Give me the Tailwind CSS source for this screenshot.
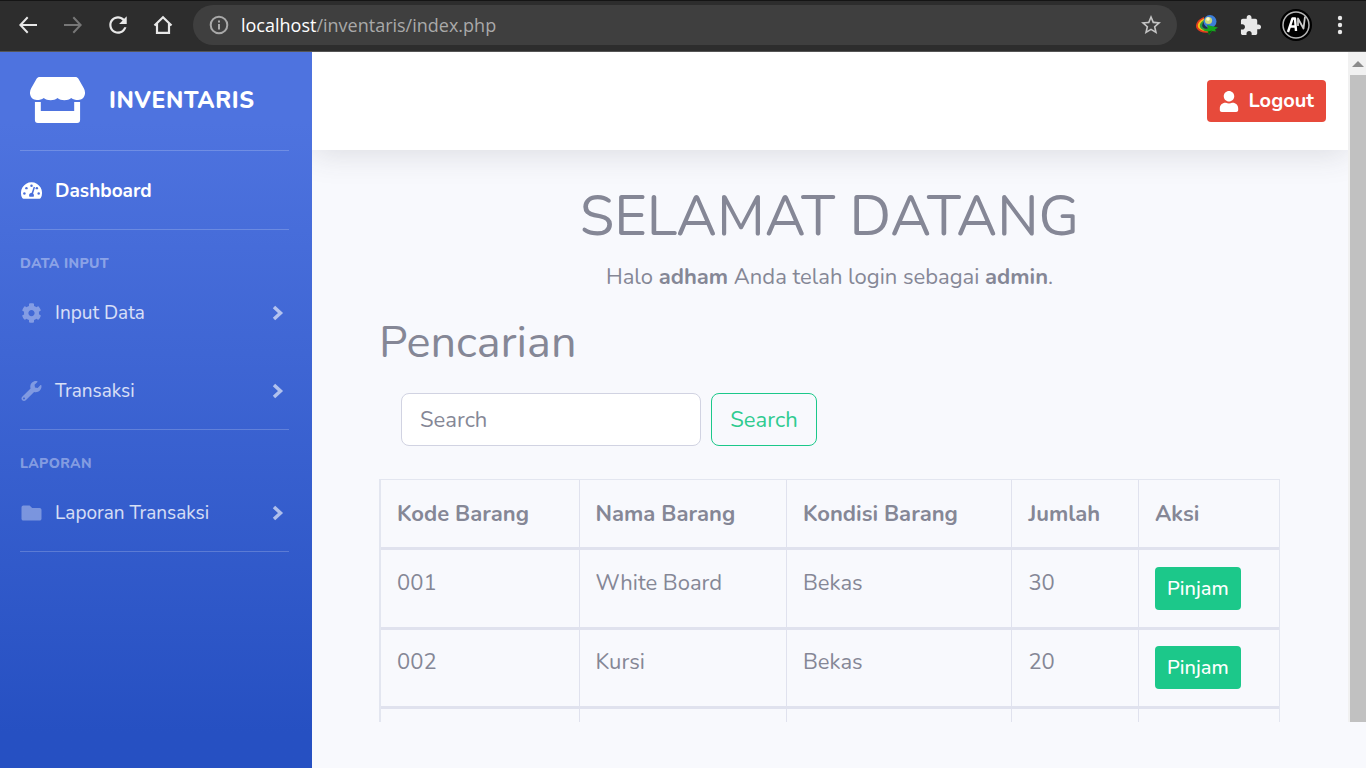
<!DOCTYPE html>
<html lang="id">
<head>
<meta charset="utf-8">
<meta name="viewport" content="width=device-width, initial-scale=1">
<title>Inventaris</title>
<script src="https://cdn.jsdelivr.net/npm/@tailwindcss/browser@4"></script>
</head>
<body class="flex h-screen flex-col overflow-hidden bg-[#f8f9fd] font-[Nunito,Lato,sans-serif] text-[#858796]">

<!-- Browser toolbar -->
<header class="flex h-[52px] shrink-0 items-center border-t border-b border-t-[#151515] border-b-[#555] bg-[#2d2d2d] pr-[14px] pb-[2px] pl-4 text-[#e8e8e8]">
  <div class="flex items-center gap-[21px]">
    <button type="button" aria-label="Back"><svg class="size-6" viewBox="0 0 24 24" fill="currentColor"><path d="M21 11H6.8l5.6-6L11 3.5 3 12l8 8.500 1.400-1.500-5.600-6H21z"/></svg></button>
    <button type="button" aria-label="Forward" class="text-[#777]"><svg class="size-6" viewBox="0 0 24 24" fill="currentColor"><path d="M3 11h14.200l-5.600-6L13 3.500 21 12l-8 8.500-1.400-1.500 5.600-6H3z"/></svg></button>
    <button type="button" aria-label="Reload"><svg class="size-6" viewBox="1 1 22 22" fill="currentColor"><path d="M17.65 6.350C16.200 4.900 14.210 4 12 4c-4.420 0-7.990 3.580-7.990 8s3.570 8 7.990 8c3.730 0 6.840-2.550 7.730-6h-2.080c-.82 2.330-3.040 4-5.650 4-3.310 0-6-2.690-6-6s2.690-6 6-6c1.660 0 3.140.69 4.220 1.780L13 11h7V4l-2.350 2.350z"/></svg></button>
    <button type="button" aria-label="Home"><svg class="size-6" viewBox="0 0 24 24" fill="none" stroke="currentColor" stroke-width="2.200"><path d="M3.500 12.500 12 4.200l8.500 8.300M6 10.500v9.400h12v-9.400"/></svg></button>
  </div>
  <div class="ml-[18px] flex h-10 min-w-0 flex-1 items-center rounded-full bg-[#3f3f3f] pr-[14px] pl-4">
    <svg class="size-5 shrink-0 text-[#a9a9a9]" viewBox="0 0 20 20" fill="none" stroke="currentColor" stroke-width="2"><circle cx="10" cy="10" r="8.300"/><path d="M10 9v5.500M10 5.500v2"/></svg>
    <p class="ml-3 min-w-0 flex-1 truncate font-['Open_Sans',sans-serif] text-[18px] leading-7 text-[#a9a9a9]"><span class="text-white">localhost</span>/inventaris/index.php</p>
    <button type="button" aria-label="Bookmark" class="text-[#c4c4c4]"><svg class="size-6" viewBox="0 0 24 24" fill="currentColor"><path d="M22 9.240l-7.190-.62L12 2 9.190 8.630 2 9.240l5.460 4.730L5.820 21 12 17.270 18.180 21l-1.630-7.030L22 9.240zM12 15.400l-3.760 2.270 1-4.280-3.320-2.880 4.380-.38L12 6.100l1.710 4.040 4.380.38-3.320 2.880 1 4.280L12 15.400z"/></svg></button>
  </div>
  <button type="button" aria-label="Download manager" class="ml-[17px]">
    <svg class="size-6" viewBox="0 0 24 24" fill="none">
      <path d="M10 4C4 6 0 12 3 16c2 3 7 4.500 12 3.500l-2-5C8 15 7 11 10 8z" fill="#e23a1e"/>
      <path d="M10 5.500C5 8 2.500 12 4.500 15c2 2.500 6 3.500 10 3l-2-4C9 14 8 11 10 8z" fill="#f5c518"/>
      <path d="M10 7c-4 2.500-5 5.500-3.500 8 1.500 2 5 2.700 8 2l-2-3c-3 0-4-2.500-2.500-5z" fill="#2f9e3a"/>
      <path d="M10 8.500c-2 2.500-2.500 4.500-1 6 1.200 1.200 3 1.500 5 1l-1-2z" fill="#1d2f52"/>
      <circle cx="16" cy="8.500" r="6.500" fill="#3d7ed8"/><circle cx="14.500" cy="7.500" r="3.600" fill="#c8d879"/><circle cx="14" cy="6" r="1.800" fill="#fafbd2"/>
      <path d="M13 12 24 14.500l-3 2 1 2-4-.5-3 4-1-3.500-5-1 5-2z" fill="#16a51e"/><path d="m14 18.500 4-1-3 4z" fill="#075a0c"/>
    </svg>
  </button>
  <button type="button" aria-label="Extensions" class="ml-[22px]"><svg class="size-[22px]" viewBox="1 0 23 23" fill="currentColor"><path d="M20.500 11H19V7c0-1.100-.9-2-2-2h-4V3.500C13 2.120 11.880 1 10.500 1S8 2.120 8 3.500V5H4c-1.100 0-1.990.9-1.990 2v3.800H3.500c1.490 0 2.700 1.210 2.700 2.700s-1.210 2.700-2.700 2.700H2V20c0 1.100.9 2 2 2h3.800v-1.500c0-1.490 1.210-2.700 2.700-2.700 1.490 0 2.700 1.210 2.700 2.700V22H17c1.100 0 2-.9 2-2v-4h1.500c1.380 0 2.500-1.120 2.500-2.500S21.880 11 20.500 11z"/></svg></button>
  <button type="button" aria-label="Profile" class="ml-[18px]">
    <svg class="size-8" viewBox="0 0 32 32"><circle cx="16" cy="16" r="16" fill="#000"/><circle cx="16" cy="16" r="13" fill="none" stroke="#b5b5b5" stroke-width="1.500"/><g fill="none" stroke="#fff" stroke-linejoin="round"><path d="m8 23 4.500-13.500H15l1 12.500m-6-4.500h6" stroke-width="2.400"/><path d="M18 17V9.500l5.500 10L25 7.500" stroke="#ccc" stroke-width="1.800"/></g></svg>
  </button>
  <button type="button" aria-label="Menu" class="ml-4"><svg class="size-6" viewBox="0 0 24 24" fill="currentColor"><circle cx="12" cy="5" r="2.200"/><circle cx="12" cy="12" r="2.200"/><circle cx="12" cy="19" r="2.200"/></svg></button>
</header>

<div class="flex min-h-0 flex-1">
  <!-- Sidebar -->
  <aside class="w-[312px] shrink-0 bg-linear-to-b from-[#4e73df] from-10% to-[#2650c2] to-95% pr-[23px] pl-5 text-white">
    <a href="#" class="flex h-[98px] items-center gap-6 pl-[10px]">
      <svg class="mb-[2px] h-[46px] w-[55px] shrink-0" viewBox="0 0 56 46" preserveAspectRatio="none" fill="currentColor"><path d="M10 0h36c1.500 0 2.500.5 3.300 1.800l5.500 9.500C58 17.500 54.500 23 49 23c-3 0-5-.5-7-2-3.500 3-10.500 3-14 0-3.500 3-10.500 3-14 0-2 1.500-4 2-7 2C1.500 23-2 17.500 1.200 11.300l5.500-9.500C7.500.5 8.500 0 10 0z"/><path d="M5 25h6v9h34v-9h6v18c0 2-1 3-3 3H8c-2 0-3-1-3-3z"/></svg>
      <span class="text-[23px] leading-8 font-extrabold tracking-wide">INVENTARIS</span>
    </a>
    <nav class="text-[19px] leading-7">
      <hr class="border-white/20">
      <a href="#" class="flex h-[78px] items-center gap-3 pt-[2px] font-bold">
        <svg class="h-6 w-[23px]" viewBox="0 0 24 24"><path d="M12 3a11 11 0 0 0-9.600 16.400c.3.400.7.600 1.200.6h16.800c.5 0 .9-.2 1.200-.6A11 11 0 0 0 12 3z" fill="#fff"/><g fill="#4a6edb"><circle cx="4.600" cy="14.500" r="1.300"/><circle cx="6.700" cy="9" r="1.300"/><circle cx="12" cy="6.500" r="1.300"/><circle cx="17.600" cy="9" r="1.300"/><circle cx="19.500" cy="14.500" r="1.300"/><path d="m14.300 7.500 1.400.5-2 6.500c1 1 1.100 2.300.5 3.500H9.800c-.9-2 .1-4 2.400-4.200z"/></g></svg>
        Dashboard
      </a>
      <hr class="border-white/20">
      <h2 class="pt-6 text-[14px] leading-5 font-extrabold tracking-wide text-white/40">DATA INPUT</h2>
      <a href="#" class="flex h-[77px] items-center gap-3 text-white/80">
        <svg class="h-5 w-[23px] text-white/35" viewBox="0 0 512 512" fill="currentColor"><path d="M487.400 315.700l-42.600-24.600c4.300-23.200 4.300-47 0-70.200l42.600-24.600c4.900-2.800 7.100-8.600 5.500-14-11.100-35.600-30-67.800-54.700-94.600-3.800-4.100-10-5.100-14.800-2.300L380.800 110c-17.900-15.400-38.500-27.300-60.800-35.100V25.800c0-5.600-3.900-10.500-9.400-11.700-36.700-8.200-74.300-7.800-109.200 0-5.500 1.200-9.400 6.100-9.400 11.700V75c-22.200 7.900-42.800 19.800-60.800 35.100L88.700 85.500c-4.900-2.800-11-1.900-14.800 2.300-24.700 26.700-43.600 58.900-54.700 94.600-1.700 5.400.6 11.200 5.500 14L67.300 221c-4.300 23.200-4.300 47 0 70.200l-42.600 24.600c-4.900 2.800-7.100 8.600-5.500 14 11.100 35.600 30 67.800 54.700 94.600 3.800 4.100 10 5.100 14.800 2.300l42.600-24.600c17.900 15.400 38.500 27.300 60.800 35.100v49.200c0 5.600 3.900 10.500 9.400 11.700 36.700 8.200 74.300 7.800 109.200 0 5.500-1.200 9.400-6.100 9.400-11.700v-49.200c22.200-7.900 42.800-19.800 60.800-35.100l42.600 24.600c4.900 2.800 11 1.900 14.800-2.300 24.700-26.700 43.600-58.900 54.700-94.600 1.500-5.500-.7-11.300-5.600-14.100zM256 336c-44.100 0-80-35.900-80-80s35.900-80 80-80 80 35.900 80 80-35.900 80-80 80z"/></svg>
        <span class="flex-1">Input Data</span>
        <svg class="mr-[5px] h-4 w-3 text-white/60" viewBox="0 0 12 16" fill="none" stroke="currentColor" stroke-width="3.500"><path d="m2 2 6.500 6L2 14"/></svg>
      </a>
      <a href="#" class="flex h-[78px] items-center gap-3 pt-[2px] text-white/80">
        <svg class="h-5 w-[23px] text-white/35" viewBox="0 0 512 512" fill="currentColor"><path d="M507.730 109.100c-2.240-9.030-13.540-12.090-20.120-5.510l-74.360 74.360-67.880-11.310-11.310-67.880 74.360-74.360c6.620-6.620 3.430-17.900-5.660-20.160-47.380-11.740-99.550.91-136.580 37.930-39.640 39.640-50.550 97.100-34.050 147.200L18.740 402.760c-24.990 24.990-24.990 65.510 0 90.500 24.990 24.990 65.510 24.990 90.500 0l213.210-213.210c50.120 16.710 107.470 5.680 147.370-34.220 37.070-37.070 49.700-89.320 37.910-136.730zM64 472c-13.250 0-24-10.750-24-24 0-13.260 10.750-24 24-24s24 10.740 24 24c0 13.250-10.750 24-24 24z"/></svg>
        <span class="flex-1">Transaksi</span>
        <svg class="mr-[5px] h-4 w-3 text-white/60" viewBox="0 0 12 16" fill="none" stroke="currentColor" stroke-width="3.500"><path d="m2 2 6.500 6L2 14"/></svg>
      </a>
      <hr class="border-white/20">
      <h2 class="pt-6 text-[14px] leading-5 font-extrabold tracking-wide text-white/40">LAPORAN</h2>
      <a href="#" class="flex h-[77px] items-center gap-3 text-white/80">
        <svg class="h-5 w-[23px] text-white/35" viewBox="0 0 512 512" fill="currentColor"><path d="M464 128H272l-64-64H48C21.490 64 0 85.490 0 112v288c0 26.510 21.490 48 48 48h416c26.510 0 48-21.490 48-48V176c0-26.510-21.490-48-48-48z"/></svg>
        <span class="flex-1">Laporan Transaksi</span>
        <svg class="mr-[5px] h-4 w-3 text-white/60" viewBox="0 0 12 16" fill="none" stroke="currentColor" stroke-width="3.500"><path d="m2 2 6.500 6L2 14"/></svg>
      </a>
      <hr class="border-white/20">
    </nav>
  </aside>

  <!-- Page content with its scrollbar -->
  <div class="mb-[46px] flex min-w-0 flex-1 overflow-hidden">
    <div class="min-w-0 flex-1">
      <div class="flex h-[98px] items-center justify-end bg-white pr-[22px] shadow-[0_4px_32px_rgba(58,59,69,0.15)]">
        <button type="button" class="flex h-[42px] items-center gap-[9px] rounded-[4px] bg-[#e74a3b] px-3 text-[20px] leading-7 font-bold text-white">
          <svg class="h-[21px] w-5" viewBox="0 0 448 512" fill="currentColor"><path d="M224 256c70.700 0 128-57.300 128-128S294.700 0 224 0 96 57.300 96 128s57.300 128 128 128zm89.600 32h-16.700c-22.200 10.200-46.900 16-72.900 16s-50.600-5.800-72.900-16h-16.700C60.200 288 0 348.200 0 422.400V464c0 26.500 21.500 48 48 48h352c26.500 0 48-21.500 48-48v-41.600c0-74.200-60.200-134.400-134.400-134.400z"/></svg>
          Logout
        </button>
      </div>
      <main class="pt-[33px] pr-[68px] pl-[67px] text-[22px] leading-8">
        <h1 class="text-center text-[56px] leading-[68px] font-normal">SELAMAT DATANG</h1>
        <p class="mt-[10px] text-center">Halo <b>adham</b> Anda telah login sebagai <b>admin</b>.</p>
        <h2 class="mt-6 text-[45px] leading-[52px] font-normal">Pencarian</h2>
        <form class="mt-6 ml-[22px] flex gap-[10px]" onsubmit="return false">
          <input type="text" aria-label="Search" placeholder="Search" class="h-[53px] w-[300px] rounded-[8px] border border-[#d1d3e2] bg-white px-[18px] placeholder:text-[#858796]">
          <button type="submit" class="h-[53px] w-[106px] rounded-[8px] border border-[#1cc88a] text-[#2fcb90]">Search</button>
        </form>
        <table class="mt-[33px] w-full table-fixed border-separate border-spacing-0 border-t border-r border-l-2 border-[#e3e6f0] text-left">
          <colgroup><col class="w-[22%]"><col class="w-[23.100%]"><col class="w-[25.100%]"><col class="w-[14.100%]"><col></colgroup>
          <thead>
            <tr class="h-[70px] *:border-b-3 *:border-[#e0e2ee] *:px-4 *:font-bold *:not-first:border-l">
              <th scope="col">Kode Barang</th><th scope="col">Nama Barang</th><th scope="col">Kondisi Barang</th><th scope="col">Jumlah</th><th scope="col">Aksi</th>
            </tr>
          </thead>
          <tbody>
            <tr class="h-20 *:border-b-3 *:border-[#e0e2ee] *:px-4 *:pt-[17px] *:align-top *:not-first:border-l">
              <td>001</td><td>White Board</td><td>Bekas</td><td>30</td>
              <td><button type="button" class="block h-[43px] rounded-[4px] bg-[#1cc88a] px-3 text-[20px] leading-7 font-medium text-white">Pinjam</button></td>
            </tr>
            <tr class="h-[79px] *:border-b-3 *:border-[#e0e2ee] *:px-4 *:pt-4 *:align-top *:not-first:border-l">
              <td>002</td><td>Kursi</td><td>Bekas</td><td>20</td>
              <td><button type="button" class="block h-[43px] rounded-[4px] bg-[#1cc88a] px-3 text-[20px] leading-7 font-medium text-white">Pinjam</button></td>
            </tr>
            <tr class="h-20 *:border-[#e0e2ee] *:not-first:border-l"><td></td><td></td><td></td><td></td><td></td></tr>
          </tbody>
        </table>
      </main>
    </div>
    <div class="flex w-[18px] shrink-0 flex-col bg-[#f1f1f1] pl-[2px]" aria-hidden="true">
      <div class="flex h-[23px] items-center justify-center"><svg class="h-2 w-3" viewBox="0 0 12 8" fill="#8b8b8b"><path d="M0 7 6 1l6 6z"/></svg></div>
      <div class="flex-1 bg-[#c1c1c1]"></div>
    </div>
  </div>
</div>
</body>
</html>
